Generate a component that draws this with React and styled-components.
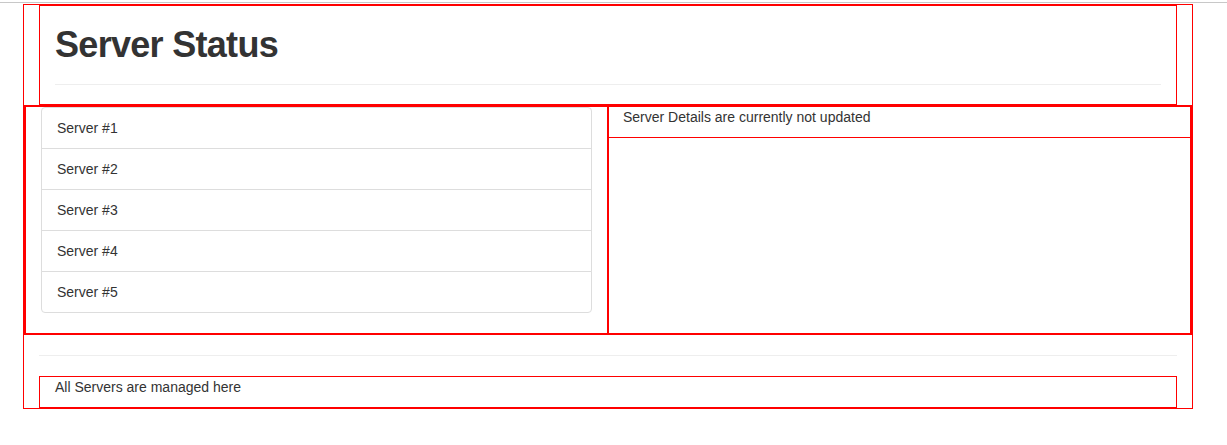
import React from "react";
import styled, { createGlobalStyle } from "styled-components";

const GlobalStyle = createGlobalStyle`
    *, *::before, *::after {
        box-sizing: border-box;
    }
    body {
        margin: 0;
        background: #fff;
        color: #333;
        font-family: "Liberation Sans", Helvetica, Arial, sans-serif;
        font-size: 14px;
        line-height: 20px;
    }
`

// Top edge of the window

const TopEdge = styled.div`
    height: 1px;
    margin-top: 2px;
    background: #c8c8c8;
`

// Container

const Container = styled.div`
    width: 1170px;
    margin: 1px 0 0 23px;
    padding: 0 15px;
    border: 1px solid red;
`
//~~~~~~~~~~~~~~~~~~~~~~~~~~~

// Header

const HeaderBox = styled.div`
    border: 1px solid red;
    padding: 0 15px;
`
const PageHeader = styled.div`
    margin: 0 0 19px;
    padding-bottom: 9px;
    border-bottom: 1px solid #eee;
`
const Title = styled.h1`
    margin: 19px 0 10px;
    font-size: 36px;
    line-height: 40px;
    font-weight: 700;
    letter-spacing: -0.7px;
    color: #333;
`
//~~~~~~~~~~~~~~~~~~~~~~~~~~~

// Servers row

const Row = styled.div`
    display: flex;
    margin: 0 -15px;
    border: 1px solid red;
`
const Column = styled.div`
    flex: 0 0 50%;
    border: 1px solid red;
    padding: ${props => props.$padded ? "0 15px" : "0"};
`
const ListGroup = styled.ul`
    margin: 0 0 21px;
    padding: 0;
    list-style: none;
`
const ListItem = styled.li`
    display: block;
    padding: 10px 15px;
    margin-bottom: -1px;
    border: 1px solid #ddd;
    background: #fff;

    &:first-child {
        border-top-left-radius: 4px;
        border-top-right-radius: 4px;
    }
    &:last-child {
        border-bottom-left-radius: 4px;
        border-bottom-right-radius: 4px;
    }
`
const DetailsBox = styled.div`
    border-bottom: 1px solid red;
    padding: 0 15px 0 14px;
`
//~~~~~~~~~~~~~~~~~~~~~~~~~~~

// Footer

const Divider = styled.hr`
    margin: 20px 0;
    border: 0;
    border-top: 1px solid #eee;
`
const FooterBox = styled.div`
    border: 1px solid red;
    padding: 0 15px;
`
const Text = styled.p`
    margin: 0 0 10px;
`

const servers = ["Server #1", "Server #2", "Server #3", "Server #4", "Server #5"]

function App() {
    return (
        <>
            <GlobalStyle />
            <TopEdge />
            <Container>
                <HeaderBox>
                    <PageHeader>
                        <Title>Server Status</Title>
                    </PageHeader>
                </HeaderBox>
                <Row>
                    <Column $padded>
                        <ListGroup>
                            {servers.map(name => (
                                <ListItem key={name}>{name}</ListItem>
                            ))}
                        </ListGroup>
                    </Column>
                    <Column>
                        <DetailsBox>
                            <Text>Server Details are currently not updated</Text>
                        </DetailsBox>
                    </Column>
                </Row>
                <Divider />
                <FooterBox>
                    <Text>All Servers are managed here</Text>
                </FooterBox>
            </Container>
        </>
    )
}

export default App
